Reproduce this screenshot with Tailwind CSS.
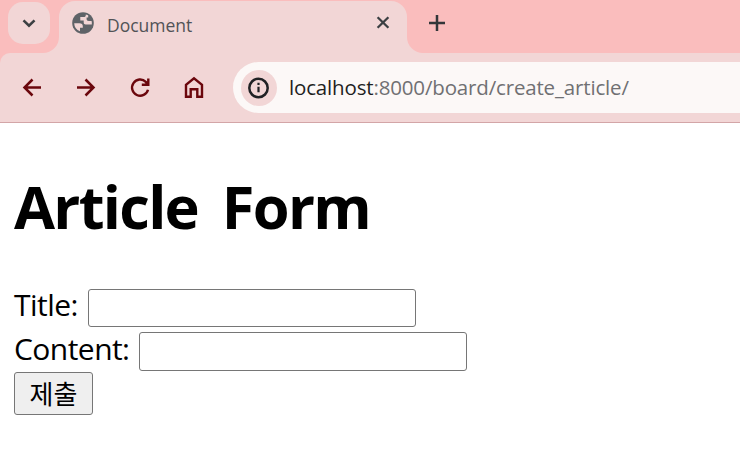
<!DOCTYPE html>
<html lang="ko">
<head>
<meta charset="utf-8">
<title>Document</title>
<script src="https://cdn.jsdelivr.net/npm/@tailwindcss/browser@4"></script>
</head>
<body class="w-[740px] h-[451px] overflow-hidden bg-white font-['Open_Sans','Noto_Sans_CJK_KR',sans-serif] text-black">
  <header class="bg-[#fabdbd]">
    <div class="flex h-[53px] items-end">
      <button class="ml-2 mb-[9px] flex size-[42px] shrink-0 items-center justify-center rounded-[15px] bg-[#f2d6d6]">
        <svg class="size-[42px]" viewBox="0 0 42 42" fill="none" stroke="#3c4043" stroke-width="2.6"><path d="M15.5 18.4 21 23.700l5.500-5.300"/></svg>
      </button>
      <svg class="-ml-[7px] size-4 shrink-0" viewBox="0 0 16 16" fill="#f2d6d6"><path d="M16 0V16H0A16 16 0 0 0 16 0Z"/></svg>
      <div class="flex h-[52px] w-[348px] shrink-0 items-start rounded-t-[16px] bg-[#f2d6d6]">
        <svg class="ml-[13px] mt-[11px] size-[22px]" viewBox="0 0 22 22"><circle cx="11" cy="11" r="10.8" fill="#5f6368"/><g fill="#f2d6d6"><path d="M2.200 11.200H7.400c2.300 0 3.500 1.100 3.400 3.200v1.300H8v3.600A9 9 0 0 1 2.200 11.200Z"/><path d="M13.800 2.400c.2 1.700-.6 2.600-2.300 2.600H8.300v3.500h3.400v2c0 1.300.8 1.900 2 1.900h6.100a9 9 0 0 0-.2-3.400h-2.800c-1.500 0-2.200-.7-2.200-2V5.400h1.600V3.300Z"/></g></svg>
        <span class="ml-[13px] mt-[12px] text-[17.5px] leading-6 text-[#515356]">Document</span>
        <svg class="ml-auto mr-[17px] mt-[14px] size-[14px]" viewBox="0 0 14 14" stroke="#3c4043" stroke-width="2.3"><path d="m1.600 2.200 10.800 10.500M12.400 2.200 1.600 12.700"/></svg>
      </div>
      <svg class="size-4 shrink-0" viewBox="0 0 16 16" fill="#f2d6d6"><path d="M0 0V16H16A16 16 0 0 1 0 0Z"/></svg>
      <svg class="mb-[22px] ml-[6px] size-4" viewBox="0 0 16 16" stroke="#333639" stroke-width="2.500"><path d="M8 0v16M0 8h16"/></svg>
    </div>
    <div class="flex h-[70px] items-center rounded-tl-[10px] border-b border-[#d3a5a7] bg-[#f2d6d6]">
      <svg class="ml-[20px] size-6" viewBox="0 0 24 24" fill="none" stroke="#6b070d" stroke-width="2.500"><path d="M21 11.500H4.700M12.500 3.500l-8 8 8 8"/></svg>
      <svg class="ml-[30px] size-6" viewBox="0 0 24 24" fill="none" stroke="#6b070d" stroke-width="2.500"><path d="M3 11.500h16.300M11.500 3.500l8 8-8 8"/></svg>
      <svg class="ml-[30px] size-6" viewBox="0 0 24 24" fill="none" stroke="#6b070d" stroke-width="2.400"><path d="M20 13.700A8.100 8.100 0 1 1 17.800 5.800L20 8M20.300 2.500v6.300h-6.500"/><path fill="#6b070d" stroke="none" d="M20.500 4.500v4h-4Z"/></svg>
      <svg class="ml-[30px] size-6" viewBox="0 0 24 24" fill="none" stroke="#6b070d" stroke-width="2.400"><path d="M4 20.800V8.800L12 2.400l8 6.400v12h-4.700v-7.500H8.700v7.500Z"/></svg>
      <div class="ml-[27px] flex h-[51px] flex-1 items-center rounded-l-full bg-[#fcf8f7]">
        <svg class="ml-2 size-9" viewBox="0 0 36 36" fill="none"><circle cx="18" cy="18" r="18" fill="#f2d6d6"/><circle cx="17.500" cy="18" r="9.200" stroke="#202124" stroke-width="2.500"/><path d="M17.500 16.800v5.500M17.500 12.800v2.200" stroke="#202124" stroke-width="2.200"/></svg>
        <span class="mb-[2px] ml-3 text-[20.5px] leading-7 tracking-[-0.16px] text-[#707073]"><span class="text-[#1f1f1f]">localhost</span>:8000/board/create_article/</span>
      </div>
    </div>
  </header>
  <main class="pl-[14px] pt-[43px]">
    <h1 class="h-[80px] text-[59.5px] leading-[80px] font-bold tracking-[-1.7px] [word-spacing:10px]">Article Form</h1>
    <form class="mt-[41px] text-[30px] leading-[40px] tracking-[-0.55px]">
      <div class="flex h-[44px] items-start">
        <label for="title" class="-mt-[2px] w-[74px] shrink-0">Title:</label>
        <input id="title" class="mt-[2px] h-[38px] w-[328px] rounded-[3px] border border-[#767676] bg-white">
      </div>
      <div class="flex h-[41px] items-start">
        <label for="content" class="-mt-[2px] w-[125px] shrink-0">Content:</label>
        <input id="content" class="mt-px h-[39px] w-[328px] rounded-[3px] border border-[#767676] bg-white">
      </div>
      <button type="button" class="flex h-[43px] w-[79px] items-center justify-center rounded-[3px] border border-[#767676] bg-[#efefef] pt-px text-[26px] leading-none tracking-normal">제출</button>
    </form>
  </main>
</body>
</html>
